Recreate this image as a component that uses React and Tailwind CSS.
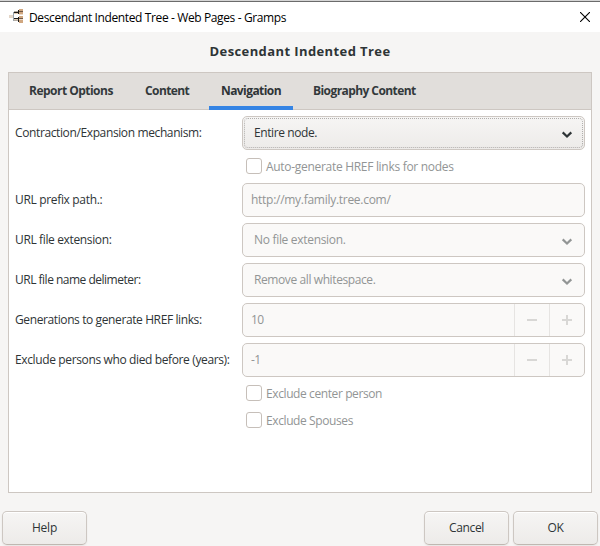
import clsx from "clsx";

const tabs = [
  { label: "Report Options", className: "w-[124px] pl-5 tracking-[-0.52px]" },
  { label: "Content", className: "w-[76px] pl-3 tracking-[-0.6px]" },
  { label: "Navigation", className: "w-[84px] pl-3 tracking-[-0.57px]", active: true },
  { label: "Biography Content", className: "w-[142px] pl-5 tracking-[-0.57px]" },
];

function AppIcon() {
  return (
    <svg width="16" height="16" viewBox="0 0 16 16" shapeRendering="crispEdges">
      <path d="M0 6h4v3H0z" fill="#e3d5c6" />
      <path d="M4 3h1v9H4z" fill="#9aa5ad" />
      <path d="M5 4h4v1H5zM5 10h4v1H5z" fill="#e0c9b0" />
      <path d="M5 2h4v1H5zM5 11h4v1H5z" fill="#b5aca2" />
      <path d="M5 3h4v1H5zM5 9h4v1H5zM9 1h1v4H9zM9 8h1v5H9z" fill="#1c1a18" />
      <path d="M10 0h4v2h-4zM10 3h4v2h-4zM10 7h4v2h-4zM10 11h4v3h-4z" fill="#d0a780" />
      <path d="M10 2h4v1h-4zM10 9h4v1h-4z" fill="#6e5846" />
      <path d="M10 5h4v1h-4zM10 10h4v1h-4z" fill="#ead9c8" />
    </svg>
  );
}

function Chevron() {
  return (
    <svg width="12" height="8" viewBox="0 0 12 8" fill="none" stroke="currentColor" strokeWidth="2.2">
      <path d="M1.7 1.4 6 5.5l4.3-4.1" />
    </svg>
  );
}

function Row({ label, className, children }) {
  return (
    <div className="flex h-[34px] items-center">
      <div className={clsx("w-[227px] shrink-0 whitespace-nowrap", className)}>{label}</div>
      {children}
    </div>
  );
}

const field = "flex h-[34px] w-[343px] items-center rounded-[5px] border border-[#cdc7c2] bg-[#faf9f8] text-[#929595]";

function Select({ value, className }) {
  return (
    <div className={clsx(field, "justify-between pl-[11px] pr-[11px]")}>
      <span className={className}>{value}</span>
      <div className="pt-[3px]">
        <Chevron />
      </div>
    </div>
  );
}

function Spin({ value }) {
  return (
    <div className={field}>
      <span className="flex-1 pl-2 tracking-[-0.5px]">{value}</span>
      <div className="flex h-full w-[35px] items-center justify-center border-l border-[#e6e4e2]">
        <div className="h-[2px] w-[10px] bg-[#d8d7d5]" />
      </div>
      <div className="flex h-full w-[35px] items-center justify-center border-l border-[#e6e4e2]">
        <svg width="10" height="10" viewBox="0 0 10 10" fill="#d8d7d5" shapeRendering="crispEdges">
          <path d="M0 4h4V0h2v4h4v2H6v4H4V6H0z" />
        </svg>
      </div>
    </div>
  );
}

function Check({ label, className }) {
  return (
    <label className="ml-[231px] flex h-4 items-center gap-1 text-[#929595]">
      <span className="size-4 rounded-[3px] border border-[#c6bfb9] bg-white" />
      <span className={clsx("pt-0.5 whitespace-nowrap", className)}>{label}</span>
    </label>
  );
}

function Button({ label, className }) {
  return (
    <button className="h-[34px] w-[85px] rounded-[5px] border border-[#cdc7c2] border-b-[#bfb8b1] bg-linear-to-b from-[#f6f5f4] to-[#edebe9] shadow-[inset_0_1px_#ffffff,0_1px_2px_#00000012]">
      <span className={className}>{label}</span>
    </button>
  );
}

export default function App() {
  return (
    <div className="flex h-[546px] w-[600px] flex-col overflow-hidden bg-[#f6f5f4] font-['Open_Sans','Noto_Sans',sans-serif] text-[12px] leading-4 text-[#2e3436]">
      {/* Title bar */}
      <div className="flex h-8 shrink-0 items-center border-t border-[#d5d5d5] bg-white">
        <div className="flex h-full w-full items-center border-t border-[#6b6b6b] pl-[9px] pr-[10px] text-black">
          <AppIcon />
          <span className="ml-1 pt-px whitespace-nowrap tracking-[-0.38px]">Descendant Indented Tree - Web Pages - Gramps</span>
          <svg className="ml-auto mb-px" width="10" height="10" viewBox="0 0 10 10" stroke="#000" strokeWidth="1.1">
            <path d="M0 0l10 10M10 0L0 10" />
          </svg>
        </div>
      </div>

      <h1 className="flex h-10 shrink-0 items-center justify-center pb-0.5 text-[13px] font-bold">
        <span className="whitespace-nowrap tracking-[0.4px]">Descendant Indented Tree</span>
      </h1>

      {/* Notebook */}
      <div className="mx-2 h-[421px] shrink-0 border border-[#cdc7c2] bg-white">
        <div className="flex h-[37px] border-b border-[#cdc7c2] bg-[#e1dedb] font-bold">
          {tabs.map((tab) => (
            <div
              key={tab.label}
              className={clsx(
                "flex h-[37px] items-center border-b-4 pt-[3px] whitespace-nowrap",
                tab.className,
                tab.active ? "border-[#3584e4]" : "border-transparent text-[#33393b]",
              )}
            >
              {tab.label}
            </div>
          ))}
        </div>

        <div className="pl-1.5 pt-1.5">
          <Row label="Contraction/Expansion mechanism:" className="tracking-[-0.38px]">
            <div className="h-[34px] w-[343px] rounded-[5px] border border-[#cdc7c2] bg-linear-to-b from-[#f6f5f4] to-[#edebe9] p-px">
              <div className="flex h-full items-center justify-between rounded-[4px] border border-dotted border-[#b0aeac] pl-[9px] pr-[9px]">
                <span className="tracking-[-0.4px]">Entire node.</span>
                <div className="pt-[3px]">
                  <Chevron />
                </div>
              </div>
            </div>
          </Row>
          <div className="pt-2 pb-[9px]">
            <Check label="Auto-generate HREF links for nodes" className="tracking-[-0.3px]" />
          </div>
          <div className="flex flex-col gap-1.5">
            <Row label="URL prefix path.:" className="tracking-[-0.33px]">
              <div className={clsx(field, "pl-2")}>
                <span className="tracking-[-0.28px]">http://my.family.tree.com/</span>
              </div>
            </Row>
            <Row label="URL file extension:" className="tracking-[-0.36px]">
              <Select value="No file extension." className="tracking-[-0.31px]" />
            </Row>
            <Row label="URL file name delimeter:" className="tracking-[-0.5px]">
              <Select value="Remove all whitespace." className="tracking-[-0.4px]" />
            </Row>
            <Row label="Generations to generate HREF links:" className="tracking-[-0.39px]">
              <Spin value="10" />
            </Row>
            <Row label="Exclude persons who died before (years):" className="tracking-[-0.37px]">
              <Spin value="-1" />
            </Row>
          </div>
          <div className="flex flex-col gap-[11px] pt-2">
            <Check label="Exclude center person" className="tracking-[-0.4px]" />
            <Check label="Exclude Spouses" className="tracking-[-0.4px]" />
          </div>
        </div>
      </div>

      {/* Action buttons */}
      <div className="mt-[18px] flex shrink-0 gap-1 px-0.5">
        <Button label="Help" className="tracking-[-0.25px]" />
        <div className="flex-1" />
        <Button label="Cancel" className="tracking-[-0.35px]" />
        <Button label="OK" className="tracking-[-0.4px]" />
      </div>
    </div>
  );
}
